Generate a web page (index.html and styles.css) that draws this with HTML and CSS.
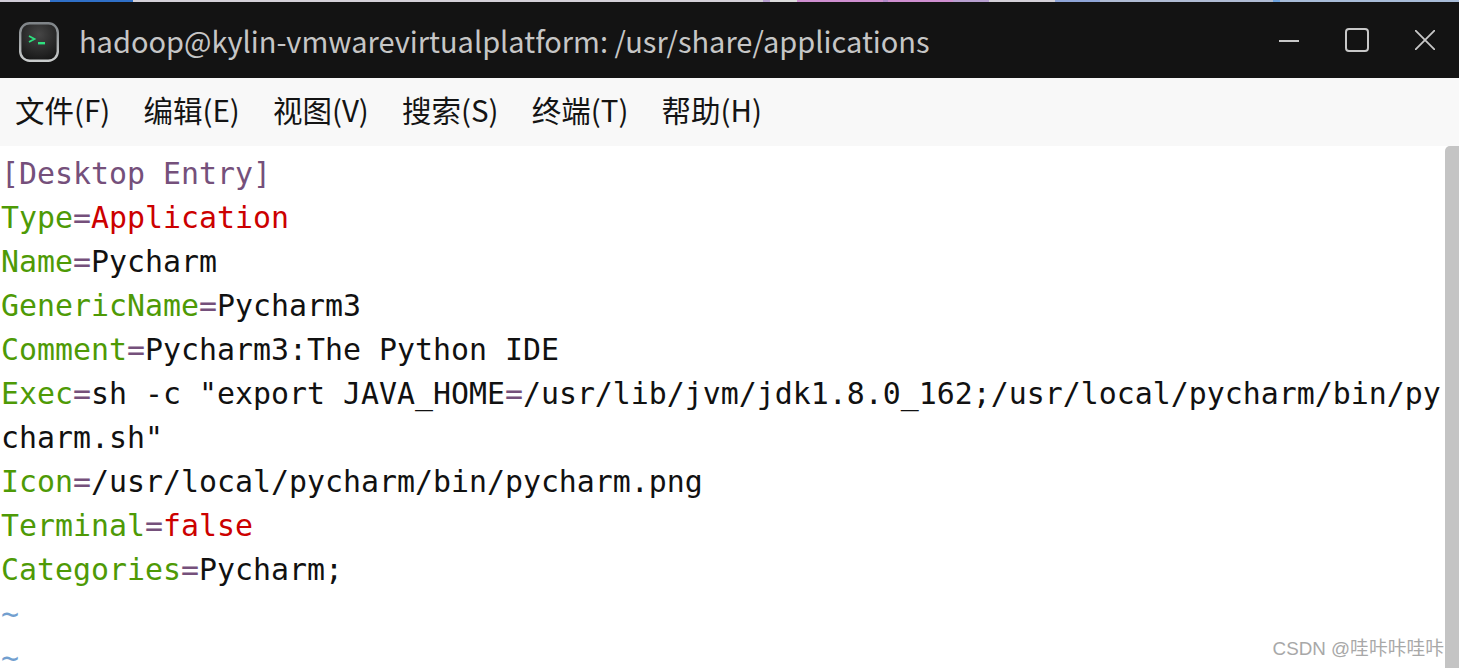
FILE: index.html
```html
<!DOCTYPE html>
<html lang="zh">
<head>
<meta charset="utf-8">
<title>Terminal</title>
<link rel="stylesheet" href="styles.css">
</head>
<body>
<div class="strip"></div>
<header class="titlebar">
  <svg class="appicon" width="40" height="40" viewBox="0 0 40 40">
    <defs>
      <linearGradient id="rim" x1="0" y1="0" x2="0" y2="1"><stop offset="0" stop-color="#7f8488"/><stop offset="1" stop-color="#c9cccc"/></linearGradient>
      <radialGradient id="face" cx="0.5" cy="0.3" r="0.75"><stop offset="0" stop-color="#464646"/><stop offset="1" stop-color="#151515"/></radialGradient>
    </defs>
    <rect x="1.2" y="1.2" width="37.6" height="37.6" rx="9.5" fill="url(#face)" stroke="url(#rim)" stroke-width="2.4"/>
    <path d="M10 14l5.5 3-5.5 3" fill="none" stroke="#2ee07f" stroke-width="1.8"/>
    <rect x="19" y="20" width="7" height="2.4" fill="#2ee07f"/>
  </svg>
  <div class="title">hadoop@kylin-vmwarevirtualplatform: /usr/share/applications</div>
  <div class="winbtns">
    <svg width="20" height="4" viewBox="0 0 20 4" class="min"><path d="M0 2h20" stroke="#c8c8c8" stroke-width="2"/></svg>
    <svg width="24" height="24" viewBox="0 0 24 24"><rect x="1" y="1" width="22" height="22" rx="3" fill="none" stroke="#c8c8c8" stroke-width="2"/></svg>
    <svg width="20" height="20" viewBox="0 0 20 20"><path d="M0 0l20 20M20 0L0 20" stroke="#c8c8c8" stroke-width="1.8" fill="none"/></svg>
  </div>
</header>
<nav class="menubar">
  <span>文件(F)</span><span>编辑(E)</span><span>视图(V)</span><span>搜索(S)</span><span>终端(T)</span><span>帮助(H)</span>
</nav>
<main class="term">
  <pre class="code"><span class="sec">[Desktop Entry]</span>
<span class="key">Type</span><span class="eq">=</span><span class="val">Application</span>
<span class="key">Name</span><span class="eq">=</span>Pycharm
<span class="key">GenericName</span><span class="eq">=</span>Pycharm3
<span class="key">Comment</span><span class="eq">=</span>Pycharm3:The Python IDE
<span class="key">Exec</span><span class="eq">=</span>sh -c "export JAVA_HOME<span class="eq">=</span>/usr/lib/jvm/jdk1.8.0_162;/usr/local/pycharm/bin/py
charm.sh"
<span class="key">Icon</span><span class="eq">=</span>/usr/local/pycharm/bin/pycharm.png
<span class="key">Terminal</span><span class="eq">=</span><span class="val">false</span>
<span class="key">Categories</span><span class="eq">=</span>Pycharm;
<span class="tilde">~</span>
<span class="tilde">~</span></pre>
  <div class="scrollbar"></div>
  <div class="watermark">CSDN @哇咔咔哇咔</div>
</main>
</body>
</html>
```
FILE: styles.css
```css
* { box-sizing: border-box; }
html, body { margin: 0; height: 100%; overflow: hidden; background: #fff; }
body { display: flex; flex-direction: column; height: 668px; }
.strip {
  height: 2px; flex: none;
  background: linear-gradient(90deg,
    #d0ccd6 0 50px, #2f70c8 50px 133px, #d4d0d8 133px 763px, #b8a0d0 763px 770px,
    #dcdcdc 770px 797px, #cf8fd0 797px 883px, #b08ac8 883px 888px, #cf8fd0 888px 953px,
    #b8a0d0 953px 989px, #d4d0d8 989px 1055px, #8fa5d8 1055px 1100px, #b0bcd4 1100px 1273px,
    #6fa4e0 1273px 1280px, #a8bcd8 1280px);
}
.titlebar { height: 76px; flex: none; background: #131313; display: flex; align-items: center; padding-left: 19px; }
.appicon { flex: none; margin-top: 4px; }
.title { margin-left: 20px; font: 29px/1 "Noto Sans CJK SC", "Noto Sans", sans-serif; color: #c6c6c6; white-space: nowrap; flex: 1; }
.winbtns { display: flex; align-items: center; gap: 46px; padding-right: 24px; }
.min { margin-top: 2px; }
.menubar { height: 68px; flex: none; background: #f8f8f8; display: flex; align-items: center; gap: 33.2px; padding: 0 0 4px 15px; font: 29.5px/1 "Noto Sans CJK SC", "Noto Sans", sans-serif; color: #141414; }
.term { flex: 1; position: relative; overflow: hidden; background: #fff; }
.code { margin: 0; padding: 6px 0 0 1px; font: 29.9px/44px "DejaVu Sans Mono", monospace; color: #111; }
.sec { color: #75507b; }
.key { color: #4e9a06; }
.eq { color: #75507b; }
.val { color: #cc0000; }
.tilde { color: #729fcf; }
.scrollbar { position: absolute; top: 0; right: 0; bottom: 0; width: 14px; background: #c4c4c4; border-top-left-radius: 5px; }
.watermark { position: absolute; right: 15px; bottom: 9px; font: 18.8px/1 "Liberation Sans", "Noto Sans CJK SC", sans-serif; color: #a8a8a8; }
```
